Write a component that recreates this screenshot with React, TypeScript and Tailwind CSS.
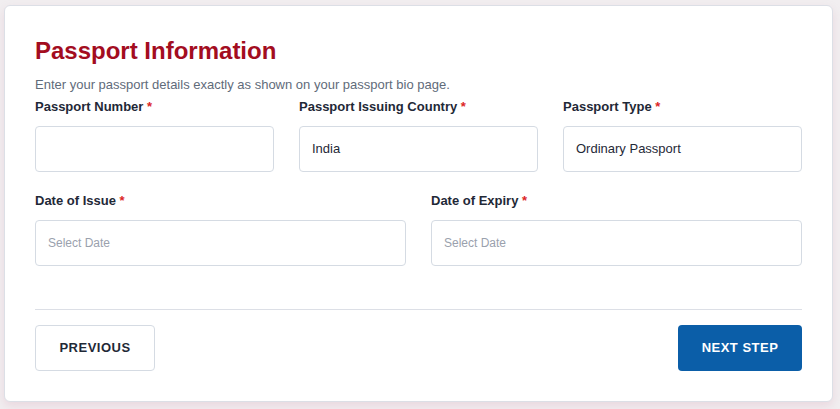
import React from 'react';

const Label: React.FC<{ text: string }> = ({ text }) => (
  <label className="block text-[13px] font-bold leading-[16px] text-[#1f2937]">
    {text} <span className="text-[#dc2626]">*</span>
  </label>
);

const Field: React.FC<{ label: string; value?: string; placeholder?: string }> = ({ label, value, placeholder }) => (
  <div className="flex flex-col gap-[11px]">
    <Label text={label} />
    <div className="h-[46px] rounded-[4px] border border-[#d5dbe3] bg-white px-[12px] flex items-center">
      {value ? (
        <span className="text-[13px] text-[#1f2937]">{value}</span>
      ) : (
        <span className="text-[12px] text-[#9aa1ad]">{placeholder}</span>
      )}
    </div>
  </div>
);

export default function App() {
  return (
    <div className="min-h-[409px] w-[840px] bg-[#f1eef0] pt-[5px] pl-[4px] pr-[7px] font-['Liberation_Sans',Arial,sans-serif]">
      <div className="rounded-[6px] border border-[#dcdfe6] bg-white px-[30px] pt-[31px] pb-[30px] shadow-[0_4px_8px_rgba(214,150,175,0.25)]">
        <h2 className="text-[24px] font-bold leading-[28px] text-[#a30d1f]">Passport Information</h2>
        <p className="mt-[12px] text-[13px] leading-[16px] text-[#5f6b7a]">
          Enter your passport details exactly as shown on your passport bio page.
        </p>

        <div className="mt-[6px] grid grid-cols-3 gap-x-[25px]">
          <Field label="Passport Number" />
          <Field label="Passport Issuing Country" value="India" />
          <Field label="Passport Type" value="Ordinary Passport" />
        </div>

        <div className="mt-[21px] grid grid-cols-2 gap-x-[25px]">
          <Field label="Date of Issue" placeholder="Select Date" />
          <Field label="Date of Expiry" placeholder="Select Date" />
        </div>

        <div className="mt-[43px] border-t border-[#dcdfe6] pt-[15px] flex items-center justify-between">
          <button className="h-[46px] w-[120px] rounded-[4px] border border-[#d5dbe3] bg-white text-[13px] font-bold tracking-[0.5px] text-[#1f2937]">
            PREVIOUS
          </button>
          <button className="h-[46px] w-[124px] rounded-[4px] bg-[#0b5ea8] text-[13px] font-bold tracking-[0.5px] text-white">
            NEXT STEP
          </button>
        </div>
      </div>
    </div>
  );
}
